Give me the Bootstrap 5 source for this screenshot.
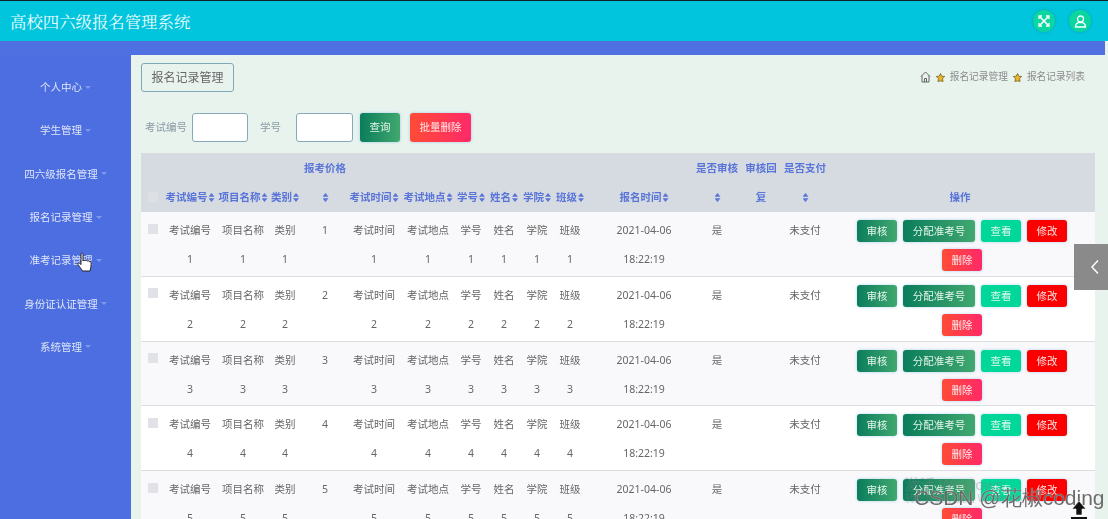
<!DOCTYPE html>
<html lang="zh">
<head>
<meta charset="utf-8">
<title>高校四六级报名管理系统</title>
<link href="https://cdn.jsdelivr.net/npm/bootstrap@5.3.0/dist/css/bootstrap.min.css" rel="stylesheet">
<style>
html,body{height:100%;overflow:hidden;margin:0}
body{font-family:"Noto Sans","Noto Sans CJK SC",sans-serif;font-size:10.5px;color:#666;background:#e9f3ee}
.page-shell{height:519px;width:1108px;position:relative;overflow:hidden;border-top:1px solid #10222a;filter:blur(.35px)}
.top-bar{height:40px;background:#00c5dd;padding:0 17px 0 10px}
.sys-title{font-family:"Noto Serif CJK SC","Noto Sans CJK SC",serif;font-size:16.4px;line-height:1;color:#f0fdfe;font-weight:400;margin:0}
.round-ico{width:22px;height:22px;border-radius:50%;background:#0bd6a0;box-shadow:0 0 3px rgba(0,120,120,.45)}
.band{height:14px;background:#4f70e0;margin-right:3px}
.body-row{height:464px}
.side-col{width:131px;flex:none;background:#4c6ee0;padding-top:10.5px}
.side-item{height:43.3px;line-height:24px;color:#dfe6f8;justify-content:center}
.side-caret{width:0;height:0;border:3px solid transparent;border-top-color:#7f99e8;border-bottom:0;margin-left:3px}
.main-col{flex:1;min-width:0;padding:8px 13px 0 10px}
.crumb-tab{height:29px;width:93px;border:1px solid #7ea8b8;border-radius:3px;font-size:12px;color:#666;line-height:27px;text-align:center;background:transparent}
.crumb-trail{font-size:9.7px;color:#8a8a8a;gap:5px;padding-right:10px;padding-top:7px}
.filter-row{margin-top:21px;height:29px}
.flt-label{color:#8a9aa5;width:39px;margin:0 8px 0 4px;white-space:nowrap}
.flt-label.second{width:19px;margin:0 17px 0 12px}
.flt-input{width:56px;height:29px;border:1px solid #86a9bb;border-radius:3px;background:#fff;padding:0;box-shadow:none}
.flt-input.wider{width:57px}
.fbtn{height:29px;border:0;border-radius:3px;color:#e9f7ef;font-size:10.5px;padding:0;box-shadow:0 0 3px rgba(80,160,220,.5)}
.grad-green{background:linear-gradient(90deg,#0a7d5c,#41a86f);color:#e5f5ec}
.grad-red{background:linear-gradient(90deg,#ff4b36,#ff2a68);color:#ffe9e9}
.w-chaxun{width:40px;margin-left:7px}
.w-batch{width:61px;margin-left:10px}
.reg-table{--bs-table-bg:#fff;--bs-table-striped-bg:#f9f9fb;--bs-table-striped-color:#666;--bs-table-color:#666;--bs-table-border-color:#dcdddf;table-layout:fixed;width:954px;margin:11px 0 0;font-size:10.5px}
.reg-table>thead>tr>th{background:#d5dbe1;color:#5a74d8;font-weight:600;padding:1px 0 0;line-height:29px;height:59px;vertical-align:bottom;text-align:center;border:0}
.reg-table>tbody>tr>td{padding:4px 0 1.75px;line-height:29px;text-align:center;vertical-align:top;border-bottom:1px solid #dcdddf}
.hstack-c{display:flex;flex-direction:column;align-items:center;white-space:nowrap}
.sort-mk{display:inline-block;width:6px;height:9px;background:#5a74d8;clip-path:polygon(50% 0,100% 42%,0 42%,50% 0,0 58%,100% 58%,50% 100%,0 58%);margin-left:1px;vertical-align:-1px}
.chk-box{display:block;width:10px;height:10px;background:#e0e2e8;margin:7.500px 0 0 7px}
.chk-box.in-head{background:#dcdfe3;margin:0 0 10px 7px}
.op-wrap{width:216px;margin:4px 25px 0 29px;gap:7px 6px}
.acb{height:22px;border:0;border-radius:3px;font-size:10.5px;padding:0;line-height:22px;box-shadow:0 0 3px rgba(90,170,230,.5)}
.w40{width:40px}.w72{width:72px}
.grad-teal{background:#00d799;color:#dff8ee}
.solid-red{background:#fb0000;color:#ffe2e2}
.side-tab{position:absolute;right:0;top:243px;width:34px;height:46px;background:#8a8a8a;display:flex;align-items:center;justify-content:center;padding-left:8px}
.wm-1{position:absolute;left:905px;top:474px;font-size:15px;color:rgba(130,130,130,.4);line-height:18px}
.wm-2{position:absolute;left:905px;top:491px;font-size:10px;color:rgba(130,130,130,.4);line-height:12px}
.wm-3{position:absolute;left:914px;top:485px;font-family:"Liberation Sans",sans-serif;font-size:21px;line-height:24px;color:rgba(70,70,70,.8);text-shadow:0 0 1px #fff;white-space:nowrap}
.cur-hand{position:absolute;left:77px;top:251px}
.cur-up{position:absolute;left:1069px;top:499px}
</style>
</head>
<body>
<div class="page-shell">
  <header class="top-bar d-flex align-items-center justify-content-between">
    <h1 class="sys-title">高校四六级报名管理系统</h1>
    <div class="d-flex" style="gap:14px">
      <span class="round-ico d-flex align-items-center justify-content-center">
        <svg width="12" height="12" viewBox="0 0 12 12" fill="none" stroke="#fff" stroke-width="1.6"><path d="M2 2l8 8M10 2l-8 8"/><path d="M1 4V1h3M8 1h3v3M11 8v3H8M4 11H1V8" stroke-width="1.3"/></svg>
      </span>
      <span class="round-ico d-flex align-items-center justify-content-center">
        <svg width="13" height="13" viewBox="0 0 13 13" fill="none" stroke="#fff" stroke-width="1.3"><circle cx="6.500" cy="4" r="3"/><path d="M1.500 12c0-2.600 1.500-4 3-4.500h4c1.500.5 3 1.900 3 4.500z"/></svg>
      </span>
    </div>
  </header>
  <div class="band"></div>
  <div class="body-row d-flex">
    <nav class="side-col">
      <div class="side-item d-flex align-items-center"><span>个人中心</span><i class="side-caret"></i></div>
      <div class="side-item d-flex align-items-center"><span>学生管理</span><i class="side-caret"></i></div>
      <div class="side-item d-flex align-items-center"><span>四六级报名管理</span><i class="side-caret"></i></div>
      <div class="side-item d-flex align-items-center"><span>报名记录管理</span><i class="side-caret"></i></div>
      <div class="side-item d-flex align-items-center"><span>准考记录管理</span><i class="side-caret"></i></div>
      <div class="side-item d-flex align-items-center"><span>身份证认证管理</span><i class="side-caret"></i></div>
      <div class="side-item d-flex align-items-center"><span>系统管理</span><i class="side-caret"></i></div>
    </nav>
    <main class="main-col">
      <div class="d-flex justify-content-between align-items-start">
        <div class="crumb-tab">报名记录管理</div>
        <div class="crumb-trail d-flex align-items-center">
          <svg width="11" height="12" viewBox="0 0 11 12" fill="none" stroke="#666" stroke-width="1"><path d="M1 5.500L5.500 1 10 5.500M2 4.500V11h7V4.500M4.500 11V7.500h2V11"/></svg>
          <svg width="9" height="9" viewBox="0 0 10 10"><path d="M5 .5l1.400 3 3.300.4-2.400 2.200.6 3.300L5 8.800 2.100 9.400l.6-3.300L.3 3.900l3.300-.4z" fill="#e8b52a" stroke="#6b5a20" stroke-width=".8"/></svg>
          <span>报名记录管理</span>
          <svg width="9" height="9" viewBox="0 0 10 10"><path d="M5 .5l1.400 3 3.300.4-2.400 2.200.6 3.300L5 8.800 2.100 9.400l.6-3.300L.3 3.900l3.300-.4z" fill="#e8b52a" stroke="#6b5a20" stroke-width=".8"/></svg>
          <span>报名记录列表</span>
        </div>
      </div>
      <form class="filter-row d-flex align-items-center">
        <span class="flt-label">考试编号</span>
        <input class="form-control flt-input" type="text" aria-label="考试编号">
        <span class="flt-label second">学号</span>
        <input class="form-control flt-input wider" type="text" aria-label="学号">
        <button type="button" class="btn fbtn grad-green w-chaxun">查询</button>
        <button type="button" class="btn fbtn grad-red w-batch">批量删除</button>
      </form>
      <table class="table table-striped reg-table">
        <colgroup><col style="width:24px"><col style="width:50px"><col style="width:56px"><col style="width:28px"><col style="width:52px"><col style="width:46px"><col style="width:62px"><col style="width:24px"><col style="width:42px"><col style="width:24px"><col style="width:42px"><col style="width:106px"><col style="width:40px"><col style="width:48px"><col style="width:40px"><col style="width:270px"></colgroup>
        <thead><tr>
          <th><i class="chk-box in-head"></i></th>
          <th><div class="hstack-c"><span>考试编号<i class="sort-mk"></i></span></div></th>
          <th><div class="hstack-c"><span>项目名称<i class="sort-mk"></i></span></div></th>
          <th><div class="hstack-c"><span>类别<i class="sort-mk"></i></span></div></th>
          <th><div class="hstack-c"><span>报考价格</span><span><i class="sort-mk"></i></span></div></th>
          <th><div class="hstack-c"><span>考试时间<i class="sort-mk"></i></span></div></th>
          <th><div class="hstack-c"><span>考试地点<i class="sort-mk"></i></span></div></th>
          <th><div class="hstack-c"><span>学号<i class="sort-mk"></i></span></div></th>
          <th><div class="hstack-c"><span>姓名<i class="sort-mk"></i></span></div></th>
          <th><div class="hstack-c"><span>学院<i class="sort-mk"></i></span></div></th>
          <th><div class="hstack-c"><span>班级<i class="sort-mk"></i></span></div></th>
          <th><div class="hstack-c"><span>报名时间<i class="sort-mk"></i></span></div></th>
          <th><div class="hstack-c"><span>是否审核</span><span><i class="sort-mk"></i></span></div></th>
          <th><div class="hstack-c"><span>审核回</span><span>复</span></div></th>
          <th><div class="hstack-c"><span>是否支付</span><span><i class="sort-mk"></i></span></div></th>
          <th>操作</th>
        </tr></thead>
        <tbody>
          <tr><td><i class="chk-box"></i></td><td>考试编号<br>1</td><td>项目名称<br>1</td><td>类别<br>1</td><td>1</td><td>考试时间<br>1</td><td>考试地点<br>1</td><td>学号<br>1</td><td>姓名<br>1</td><td>学院<br>1</td><td>班级<br>1</td><td>2021-04-06<br>18:22:19</td><td>是</td><td></td><td>未支付</td><td><div class="op-wrap d-flex flex-wrap justify-content-center"><button type="button" class="btn acb w40 grad-green">审核</button><button type="button" class="btn acb w72 grad-green">分配准考号</button><button type="button" class="btn acb w40 grad-teal">查看</button><button type="button" class="btn acb w40 solid-red">修改</button><button type="button" class="btn acb w40 grad-red">删除</button></div></td></tr>
          <tr><td><i class="chk-box"></i></td><td>考试编号<br>2</td><td>项目名称<br>2</td><td>类别<br>2</td><td>2</td><td>考试时间<br>2</td><td>考试地点<br>2</td><td>学号<br>2</td><td>姓名<br>2</td><td>学院<br>2</td><td>班级<br>2</td><td>2021-04-06<br>18:22:19</td><td>是</td><td></td><td>未支付</td><td><div class="op-wrap d-flex flex-wrap justify-content-center"><button type="button" class="btn acb w40 grad-green">审核</button><button type="button" class="btn acb w72 grad-green">分配准考号</button><button type="button" class="btn acb w40 grad-teal">查看</button><button type="button" class="btn acb w40 solid-red">修改</button><button type="button" class="btn acb w40 grad-red">删除</button></div></td></tr>
          <tr><td><i class="chk-box"></i></td><td>考试编号<br>3</td><td>项目名称<br>3</td><td>类别<br>3</td><td>3</td><td>考试时间<br>3</td><td>考试地点<br>3</td><td>学号<br>3</td><td>姓名<br>3</td><td>学院<br>3</td><td>班级<br>3</td><td>2021-04-06<br>18:22:19</td><td>是</td><td></td><td>未支付</td><td><div class="op-wrap d-flex flex-wrap justify-content-center"><button type="button" class="btn acb w40 grad-green">审核</button><button type="button" class="btn acb w72 grad-green">分配准考号</button><button type="button" class="btn acb w40 grad-teal">查看</button><button type="button" class="btn acb w40 solid-red">修改</button><button type="button" class="btn acb w40 grad-red">删除</button></div></td></tr>
          <tr><td><i class="chk-box"></i></td><td>考试编号<br>4</td><td>项目名称<br>4</td><td>类别<br>4</td><td>4</td><td>考试时间<br>4</td><td>考试地点<br>4</td><td>学号<br>4</td><td>姓名<br>4</td><td>学院<br>4</td><td>班级<br>4</td><td>2021-04-06<br>18:22:19</td><td>是</td><td></td><td>未支付</td><td><div class="op-wrap d-flex flex-wrap justify-content-center"><button type="button" class="btn acb w40 grad-green">审核</button><button type="button" class="btn acb w72 grad-green">分配准考号</button><button type="button" class="btn acb w40 grad-teal">查看</button><button type="button" class="btn acb w40 solid-red">修改</button><button type="button" class="btn acb w40 grad-red">删除</button></div></td></tr>
          <tr><td><i class="chk-box"></i></td><td>考试编号<br>5</td><td>项目名称<br>5</td><td>类别<br>5</td><td>5</td><td>考试时间<br>5</td><td>考试地点<br>5</td><td>学号<br>5</td><td>姓名<br>5</td><td>学院<br>5</td><td>班级<br>5</td><td>2021-04-06<br>18:22:19</td><td>是</td><td></td><td>未支付</td><td><div class="op-wrap d-flex flex-wrap justify-content-center"><button type="button" class="btn acb w40 grad-green">审核</button><button type="button" class="btn acb w72 grad-green">分配准考号</button><button type="button" class="btn acb w40 grad-teal">查看</button><button type="button" class="btn acb w40 solid-red">修改</button><button type="button" class="btn acb w40 grad-red">删除</button></div></td></tr>
        </tbody>
      </table>
    </main>
  </div>
  <div class="side-tab"><svg width="10" height="16" viewBox="0 0 10 16" fill="none" stroke="#fff" stroke-width="1.500"><path d="M8 1.500L2 8l6 6.500"/></svg></div>
  <svg class="cur-hand" width="16" height="22" viewBox="0 0 16 22"><path d="M4 1.500c1-.8 2-.3 2 1V9c0-1 2-1.200 2.300 0 .3-1 2-1 2.200.2.400-.8 2-.6 2 .6.500-.3 1.700-.1 1.700 1.200 0 3-.4 5.500-1.200 8H5.500C4.500 17 2.500 15 1 12.500c-.6-1 .5-2 1.600-1.200L4 12.500z" fill="#fff" stroke="#222" stroke-width="1"/></svg>
  <div class="wm-1">激活 Windows</div>
  <div class="wm-2">转到设置以激活 Windows。</div>
  <div class="wm-3">CSDN @花椒coding</div>
  <svg class="cur-up" width="20" height="20" viewBox="0 0 20 20"><path d="M10 1l7 8h-4v6H7V9H3z" fill="#111" stroke="#fff" stroke-width=".6"/><rect x="2" y="17" width="16" height="3" fill="#111"/></svg>
</div>
</body>
</html>
